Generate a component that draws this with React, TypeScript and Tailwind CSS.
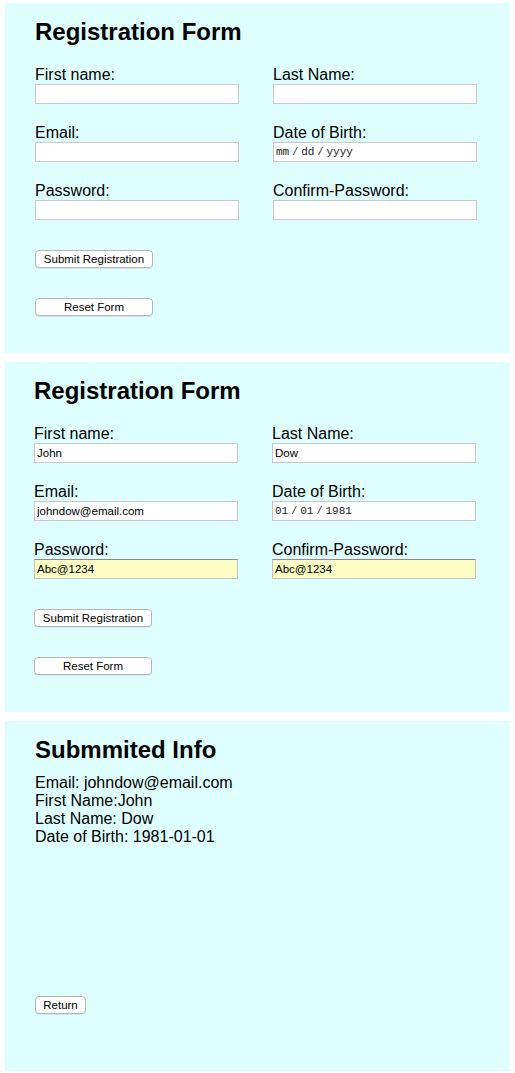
const font = { fontFamily: '"Liberation Sans", Arial, sans-serif' }

function Field({
  label,
  value,
  date,
  filled,
}: {
  label: string
  value?: string
  date?: string[]
  filled?: boolean
}) {
  const box = filled
    ? 'border border-[#c4c4c4] border-t-[#8c8c8c] bg-[#fbfdc4]'
    : 'border border-[#c8c8c8] bg-white'

  return (
    <div className="flex flex-col">
      <label className="block text-[16px] leading-[18px] text-black">{label}</label>
      {date ? (
        <div className={`flex h-[20px] w-[204px] items-center px-[2px] ${box}`}>
          <span className="font-['Liberation_Mono',monospace] text-[11px] text-[#222]">{date[0]}</span>
          <span className="mx-[3px] font-['Liberation_Mono',monospace] text-[10px] text-[#222]">/</span>
          <span className="font-['Liberation_Mono',monospace] text-[11px] text-[#222]">{date[1]}</span>
          <span className="mx-[3px] font-['Liberation_Mono',monospace] text-[10px] text-[#222]">/</span>
          <span className="font-['Liberation_Mono',monospace] text-[11px] text-[#222]">{date[2]}</span>
        </div>
      ) : (
        <input
          type="text"
          readOnly
          defaultValue={value ?? ''}
          className={`h-[20px] w-[204px] px-[2px] py-0 text-[11.5px] text-black outline-none ${box}`}
          style={font}
        />
      )}
    </div>
  )
}

function Button({ children, width }: { children: string; width: string }) {
  return (
    <button
      type="button"
      className={`h-[18px] ${width} rounded-[4px] border border-[#b5b5b5] bg-white pt-[1px] text-[11.5px] leading-none text-black shadow-[0_1px_0_rgba(0,0,0,0.08)]`}
      style={font}
    >
      {children}
    </button>
  )
}

function RegistrationForm({ filled, shift }: { filled?: boolean; shift?: boolean }) {
  return (
    <div className={`h-[350px] bg-[#dfffff] pt-[15px] ${shift ? 'pl-[29px]' : 'pl-[30px]'}`}>
      <h1 className="text-[24px] font-bold leading-[28px] text-black">Registration Form</h1>

      <div className="mt-[20px] grid grid-cols-[204px_204px] gap-x-[34px] gap-y-[20px]">
        <Field label="First name:" value={filled ? 'John' : ''} />
        <Field label="Last Name:" value={filled ? 'Dow' : ''} />
        <Field label="Email:" value={filled ? 'johndow@email.com' : ''} />
        <Field label="Date of Birth:" date={filled ? ['01', '01', '1981'] : ['mm', 'dd', 'yyyy']} />
        <Field label="Password:" value={filled ? 'Abc@1234' : ''} filled={filled} />
        <Field label="Confirm-Password:" value={filled ? 'Abc@1234' : ''} filled={filled} />
      </div>

      <div className="mt-[30px] flex flex-col items-start gap-[30px]">
        <Button width="w-[118px]">Submit Registration</Button>
        <Button width="w-[118px]">Reset Form</Button>
      </div>
    </div>
  )
}

export default function App() {
  return (
    <div className="flex min-h-screen flex-col gap-[9px] bg-white px-[5px] pt-[3px]" style={font}>
      <RegistrationForm />
      <RegistrationForm filled shift />

      <div className="h-[350px] bg-[#dfffff] pl-[30px] pt-[15px]">
        <h1 className="text-[24px] font-bold leading-[28px] text-black">Submmited Info</h1>
        <div className="mt-[10px] text-[16px] leading-[18px] text-black">
          <p>Email: johndow@email.com</p>
          <p>First Name:John</p>
          <p>Last Name: Dow</p>
          <p>Date of Birth: 1981-01-01</p>
        </div>
        <div className="mt-[146px]">
          <Button width="w-[51px]">Return</Button>
        </div>
      </div>
    </div>
  )
}
